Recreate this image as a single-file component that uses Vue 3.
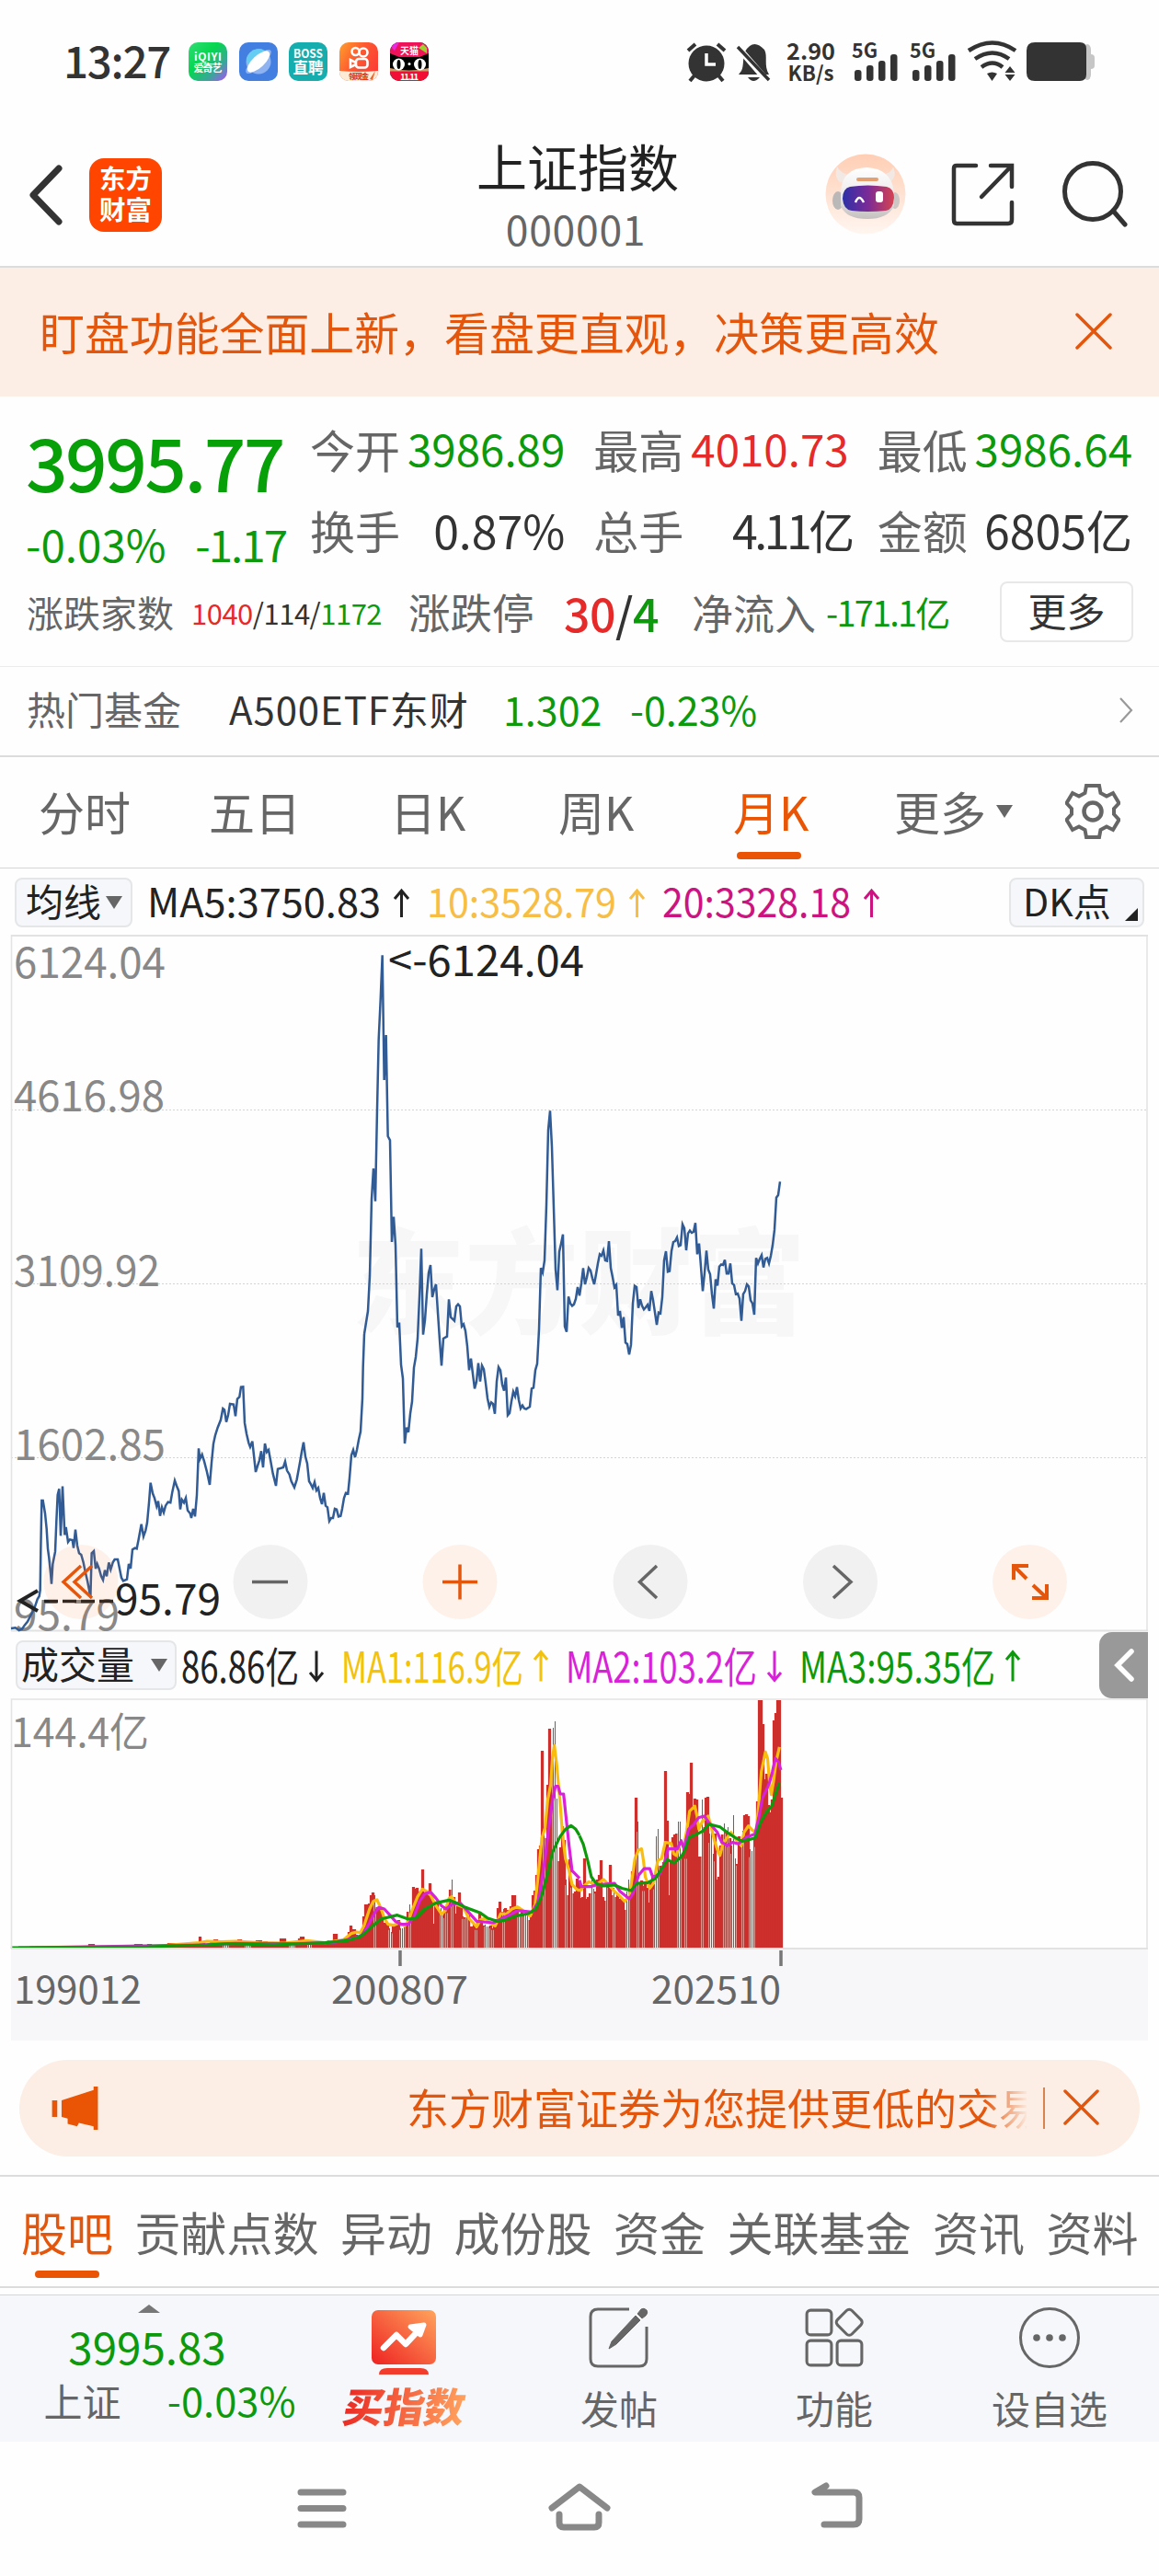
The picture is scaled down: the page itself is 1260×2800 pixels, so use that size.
<script setup>
const quotes = [
  { label: '今开', value: '3986.89', tone: 'down' },
  { label: '最高', value: '4010.73', tone: 'up' },
  { label: '最低', value: '3986.64', tone: 'down' },
  { label: '换手', value: '0.87%', tone: 'big' },
  { label: '总手', value: '4.11亿', tone: 'big tight' },
  { label: '金额', value: '6805亿', tone: 'big' },
]
const periods = [
  { name: '分时', cls: 'p1' },
  { name: '五日', cls: 'p2' },
  { name: '日K', cls: 'p3' },
  { name: '周K', cls: 'p4' },
  { name: '月K', cls: 'p5 on' },
]
const averages = [
  { text: 'MA5:3750.83', width: 254, cls: 'ink' },
  { text: '10:3528.79', width: 206, cls: 'amber' },
  { text: '20:3328.18', width: 205, cls: 'magenta' },
]
const volumes = [
  { text: '86.86亿', x: 197, w: 128, ax: 344, down: true, color: '#222' },
  { text: 'MA1:116.9亿', x: 371, w: 198, ax: 588, down: false, color: '#f3c20c' },
  { text: 'MA2:103.2亿', x: 615, w: 208, ax: 842, down: true, color: '#d822d8' },
  { text: 'MA3:95.35亿', x: 869, w: 213, ax: 1101, down: false, color: '#0c9a0c' },
]
const sections = ['股吧', '贡献点数', '异动', '成份股', '资金', '关联基金', '资讯', '资料']
const scale = [
  { text: '6124.04', y: 119, w: 165 },
  { text: '4616.98', y: 264, w: 164 },
  { text: '3109.92', y: 454, w: 159 },
  { text: '1602.85', y: 643, w: 165 },
  { text: '95.79', y: 828, w: 115 },
]

const priceEarly =
  '36,1410 50,1408 62,1416 72,1412 80,1400 90,1388 104,1360 112,1345 122,1315 128,1305 131,1285 133,1150 136,993 140,993 147,1035 152,1085 156,1150 160,1180 165,1230 168,1265 172,1200 180,1160 184,1060 188,975 193,955 198,1108 204,947 211,1105 215,1080 222,1128 228,1120 236,1122 240,1148 246,1088 252,1140 258,1165 265,1170 272,1195 278,1225 285,1255 290,1280 295,1310 299,1165 306,1158 312,1215 317,1200 323,1215 330,1240 336,1252 342,1220 348,1240 355,1195 361,1218 368,1195 374,1185 384,1185 390,1215 396,1245 402,1255 414,1250 420,1200 426,1215 432,1153 440,1148 446,1150 452,1120 461,1070 468,1110 475,1090 480,1065 486,1000 491,935 498,970 504,985 511,1012 516,995 522,1043 528,1015 534,1032 540,1010 548,998 556,1000 562,965 570,928 576,945 583,962 588,1022 593,990 600,1000 606,985 612,1025 620,1035 624,1050 630,1020 636,1045 642,975 648,823 652,858 659,843 666,865 675,900 684,942 690,870 696,808 702,780 710,755 720,730 727,693 732,697 738,737 744,715 750,678 762,680 768,718 774,662 781,655 786,623 793,622 798,740 804,775 811,805 816,818 823,800 834,900 840,880 846,862 852,832 858,885 864,807 870,835 876,828 882,860 890,905 900,945 906,890 914,888 924,885 930,866 936,895 944,908 950,930 960,950 968,925 978,870 984,835 990,803 996,850 1002,872 1008,930 1014,940 1020,952 1026,933 1032,960 1038,952 1044,985 1050,1005 1056,968 1062,1010 1068,1015 1074,1060 1080,1050 1086,1050 1092,1020 1098,1022 1104,1045 1111,1043 1116,1020 1122,985 1128,968 1135,970 1140,920 1146,845 1152,828 1158,852 1164,828 1170,795 1176,768 1182,660 1184,560 1188,450'
const priceRecent =
  '48,900 60,825 66,710 72,460 78,360 84,467 90,168 95,-60 101,-189 107,-335 113,72 119,-75 125,255 132,268 138,600 144,518 150,610 156,878 162,863 168,1000 174,1045 180,1257 186,1205 192,1220 198,1160 204,1120 210,1010 216,975 222,915 228,780 234,622 240,902 246,855 252,770 258,700 264,675 270,780 276,755 282,738 288,830 294,920 300,1003 306,915 318,908 324,787 330,845 342,857 348,810 354,803 360,810 366,875 372,868 378,890 384,940 390,1018 396,980 402,1030 408,1078 414,1055 420,995 426,1055 432,1003 438,1015 444,1060 450,1110 456,1138 462,1123 468,1128 474,1160 480,1055 486,1008 492,1018 498,1065 504,1085 510,1042 516,1165 522,1158 528,1120 534,1088 540,1103 546,1073 552,1115 558,1143 564,1133 570,1143 576,1145 588,1137 594,1078 600,1075 606,1018 612,997 618,885 624,685 630,700 636,660 642,480 648,235 654,172 660,290 666,490 672,690 678,757 684,632 690,605 696,575 702,875 708,893 714,778 720,800 726,808 732,803 738,785 744,747 750,775 756,735 762,685 768,738 774,715 780,685 786,693 792,718 798,738 804,705 810,670 816,640 822,645 828,628 834,660 840,662 846,597 852,685 858,715 864,748 870,740 876,840 882,825 888,880 894,845 900,928 906,933 912,967 918,935 924,800 930,743 936,747 942,815 948,787 954,808 960,820 966,813 972,805 978,825 984,760 990,790 996,830 1002,870 1008,830 1014,833 1020,780 1026,660 1032,630 1038,697 1044,695 1050,630 1056,600 1062,597 1068,585 1074,613 1080,610 1086,542 1092,555 1098,627 1104,572 1110,563 1116,570 1122,567 1128,538 1134,640 1140,605 1146,680 1152,760 1158,700 1164,628 1170,690 1176,705 1182,770 1188,817 1194,722 1200,742 1206,680 1212,673 1218,675 1224,658 1230,703 1236,703 1242,670 1248,735 1254,740 1260,770 1266,768 1272,785 1278,857 1284,770 1290,760 1296,738 1302,745 1308,790 1314,800 1320,837 1326,652 1332,670 1338,655 1344,643 1350,683 1356,655 1362,652 1368,670 1374,645 1380,610 1386,560 1392,455 1398,447 1404,403'

// Turnover samples as "position height", a trailing g marks a falling month.
const early =
  '30 2,60 1,90 2,130 1,160 2,200 1,230 2,250 5,258 3,300 2,350 2,378 5,390 3,405 5,415 3,440 2,470 6,480 3,500 3,525 4,534 6,540 13,546 7,560 5,575 8,583 10,590 7,610 5g,620 5,640 8,648 10,656 7,670 4g,685 4,703 9,710 5,718 8,730 4,750 7,768 11,775 5,790 4g,800 8,808 11,817 13,825 8,835 5g,850 9,860 7,872 5,880 5,895 9,907 16,914 9,925 8,940 10,945 18,950 25,956 21,963 15,972 14,980 20,985 35,991 48,998 49,1003 58,1009 61,1014 58g,1020 45,1026 46,1033 36,1040 28,1046 27,1051 22g,1056 18g,1062 25,1068 27,1074 28,1080 31,1085 22g,1091 28g,1096 25,1101 40,1106 48g,1111 40,1117 67,1123 65,1128 66,1135 62,1141 86,1147 60,1152 62,1157 60,1162 71,1168 52,1174 27,1180 50,1185 42,1190 44g,1195 36g,1201 46,1206 42g,1211 52,1216 64,1221 75g,1226 56,1231 38,1236 48,1240 61,1245 45,1251 35g,1257 34,1262 46g,1267 36,1274 24,1280 27,1285 22g,1291 28,1296 39,1302 28,1308 25,1314 26g,1319 24g,1325 25,1330 22g,1335 25,1340 32,1345 44,1350 51,1356 40,1361 43g,1366 44,1371 42,1377 40,1383 46,1389 58,1395 44,1401 40g,1407 38g,1412 42,1418 38g,1424 36g,1429 31,1434 37,1439 58,1444 63,1450 80,1455 108,1460 112,1464 215,1469 131g,1474 120,1479 178,1485 239,1490 202,1495 240g,1499 247g,1505 163g,1510 95,1515 110,1519 133,1524 118,1529 75g,1534 58,1539 97,1544 72g,1549 60,1554 62,1560 76,1565 72'
const late =
  '0 55,5 56,10 98,16 54,22 56,27 60,32 75g,37 65g,42 62,47 75,52 80,56 96,61 56,66 52,71 72g,76 70,81 91,86 58,91 66g,96 56,101 60,106 54,111 55,116 52,121 42,126 62g,131 75g,136 58,141 84,146 84,150 164,156 138g,161 70,166 74,171 68g,176 72,181 66,186 50,191 72,196 78,201 70g,206 122g,211 130g,216 90,221 88,226 94,230 193,236 139,242 58,247 95,252 121,257 124,262 125,270 138g,275 100,280 112,286 106g,292 170,297 168,300 202,306 155,312 163,317 162,324 100,330 162g,337 132,342 164,347 165,350 125g,355 128g,360 103g,365 125,370 75,376 78,381 112,385 124,390 136g,395 126,400 132g,405 120,410 112g,414 145g,420 98g,425 92,430 122,435 110,440 128g,445 145,450 146,456 144,462 108g,466 106g,471 120g,476 125,481 160,485 270,490 270,496 244,501 184,506 190,511 156,516 148,521 162,526 248,531 256,536 270,541 270,546 164'
const parse = (raw, origin) =>
  raw.split(',').map((s) => {
    const [p, h] = s.split(' ')
    return { x: origin + Number(p) / 2.489, h: parseFloat(h), fall: h.endsWith('g') }
  })
const samples = [...parse(early, 0), ...parse(late, 630)]
const bars = []
for (let x = 13; x < 850; x += 2) {
  let best = samples[0]
  for (const s of samples) if (Math.abs(s.x - x) < Math.abs(best.x - x)) best = s
  bars.push({ x, h: best.h, fall: best.fall && x > 200 })
}
const rising = bars.filter((b) => !b.fall)
const falling = bars.filter((b) => b.fall)

const volumeLines = [
  {
    color: '#f9bd10',
    early: '50,1070 400,1068 540,1055 560,1050 600,1052 640,1050 700,1055 770,1056 830,1048 880,1055 930,1045 950,1025 965,1020 975,1022 985,1000 1000,945 1010,920 1020,915 1030,940 1040,975 1050,995 1065,998 1080,990 1095,1000 1105,985 1115,950 1130,905 1143,880 1155,888 1165,900 1180,935 1195,962 1205,950 1215,910 1222,905 1235,930 1255,940 1268,975 1280,990 1290,1003 1300,980 1315,975 1325,990 1340,1000 1355,960 1370,962 1385,945 1400,938 1415,950 1435,968 1448,930 1455,850 1466,715 1475,680 1482,590 1490,540 1495,450 1500,412 1506,470 1515,590 1522,700 1530,780 1540,820 1548,865 1560,880 1568,885',
    late: '0,1165 10,1150 25,1135 45,1145 65,1128 80,1145 95,1165 110,1180 122,1195 135,1180 143,1120 150,1065 160,1038 168,1035 173,1070 178,1120 190,1155 200,1140 212,1070 222,1065 232,1015 248,1018 255,1050 262,1055 272,1020 283,1020 290,980 298,920 312,905 318,935 323,975 333,950 348,935 356,965 365,1010 374,1040 380,1055 388,1020 400,1000 410,985 422,1005 438,1025 445,985 457,965 468,978 478,985 485,900 492,800 503,740 509,760 514,830 519,870 525,830 532,770 541,725',
  },
  {
    color: '#d822d8',
    early: '80,1071 540,1062 640,1057 800,1058 900,1055 960,1040 980,1030 1000,990 1015,955 1025,940 1040,945 1055,965 1070,985 1085,995 1105,995 1120,970 1135,920 1150,895 1165,890 1180,910 1195,935 1207,945 1222,930 1245,925 1260,945 1275,965 1290,985 1335,990 1360,975 1385,960 1400,950 1440,955 1455,925 1465,860 1475,780 1485,680 1495,590 1503,545 1510,545 1516,570 1525,570 1532,650 1540,740 1548,820 1568,845',
    late: '0,1130 5,1150 30,1150 45,1145 95,1140 110,1165 135,1187 145,1170 160,1115 175,1095 190,1095 198,1120 215,1115 228,1085 240,1035 265,1035 275,1010 283,1035 295,975 310,960 322,940 338,935 350,955 362,970 373,985 385,1015 400,1025 415,1015 430,1020 450,1000 475,990 485,940 495,880 508,850 515,830 522,800 530,760 538,770 545,795',
  },
  {
    color: '#0c9a0c',
    early: '30,1071 400,1068 560,1062 620,1058 740,1062 880,1055 940,1048 975,1035 1000,1010 1030,978 1075,965 1105,978 1125,975 1150,945 1180,925 1215,916 1240,928 1260,940 1300,958 1320,975 1345,985 1365,982 1395,968 1430,960 1450,945 1465,905 1480,840 1495,760 1515,710 1530,685 1545,673 1558,685 1568,705',
    late: '0,995 10,1020 22,1070 32,1120 45,1140 65,1148 95,1145 115,1155 140,1162 155,1140 185,1138 205,1125 220,1100 238,1068 255,1078 275,1060 285,1040 297,1000 318,990 335,980 350,960 380,968 400,985 420,1000 440,1012 475,1002 490,955 505,925 520,905 530,870 541,835',
  },
]
</script>

<template>
  <div class="screen">
    <header class="status">
      <span class="clock">13:27</span>
      <div class="apps">
        <svg viewBox="0 0 42 42">
          <defs>
            <linearGradient id="qy" x1="0" y1="0" x2="1" y2="1">
              <stop offset="0" stop-color="#31dd76" /><stop offset=".4" stop-color="#05d64f" />
              <stop offset=".72" stop-color="#3aa69a" /><stop offset="1" stop-color="#b14cff" />
            </linearGradient>
          </defs>
          <rect width="42" height="42" rx="10" fill="url(#qy)" />
          <text x="21" y="20" class="tiny" font-size="12" textLength="30">iQIYI</text>
          <text x="21" y="32" class="tiny" font-size="11" textLength="31">爱奇艺</text>
        </svg>
        <svg viewBox="0 0 42 42">
          <rect width="42" height="42" rx="10" fill="#437fe0" />
          <circle cx="21" cy="21" r="13.500" fill="#8fb3f0" />
          <path d="M8 18A13.500 13.500 0 0 1 33 14L10 29Z" fill="#66cdf2" />
          <ellipse cx="21" cy="21" rx="18" ry="6" transform="rotate(-43 21 21)" fill="#8fb3f0" />
          <ellipse cx="21" cy="21" rx="15.500" ry="6.500" transform="rotate(-43 21 21)" fill="#fff" />
        </svg>
        <svg viewBox="0 0 42 42">
          <rect width="42" height="42" rx="10" fill="#15adae" />
          <text x="21" y="17" class="tiny" font-size="13" font-weight="500" textLength="32" lengthAdjust="spacingAndGlyphs">BOSS</text>
          <text x="21" y="34" class="tiny" font-size="16.500" textLength="33">直聘</text>
        </svg>
        <svg viewBox="0 0 42 42">
          <defs>
            <linearGradient id="ks" x1="0" y1="0" x2="1" y2=".6">
              <stop offset="0" stop-color="#ffa02c" /><stop offset=".5" stop-color="#fd5a30" /><stop offset="1" stop-color="#fb3d35" />
            </linearGradient>
          </defs>
          <rect width="42" height="42" rx="10" fill="url(#ks)" />
          <g fill="none" stroke="#fff" stroke-width="2.600">
            <circle cx="17.500" cy="10" r="4" /><circle cx="26" cy="11" r="4.500" />
            <rect x="18" y="18" width="12.500" height="9.500" rx="3" /><path d="M18 22L12 19V27L18 24" />
          </g>
          <path d="M0 31Q20 33 42 31V32A10 10 0 0 1 32 42H10A10 10 0 0 1 0 32Z" fill="#fdebd5" />
          <text x="21" y="40" class="tiny red" font-size="8" textLength="22">领现金</text>
          <path d="M33 40L39 31L36 41Z" fill="#f0642c" />
        </svg>
        <svg viewBox="0 0 42 42">
          <clipPath id="tm"><rect width="42" height="42" rx="10" /></clipPath>
          <g clip-path="url(#tm)">
            <rect width="42" height="42" fill="#000" />
            <path d="M0 0H42V12L32 16H10L0 12Z" fill="#ef1458" />
            <path d="M3 0H10L5 9L2 6Z" fill="#e62ae0" /><path d="M36 2L40 6V12L31 6Z" fill="#9bd12c" />
            <path d="M0 28Q20 33 42 28V32H0Z" fill="#d69a68" /><rect y="31.500" width="42" height="11" fill="#f20f36" />
            <text x="21" y="13" class="tiny" font-size="10" textLength="20">天猫</text>
            <circle cx="9.500" cy="24" r="6.500" fill="#fff" /><circle cx="32.500" cy="24" r="6.500" fill="#fff" />
            <ellipse cx="9.500" cy="24" rx="2" ry="5" /><ellipse cx="32.500" cy="24" rx="2" ry="5" />
            <circle cx="21" cy="23.500" r="1.500" fill="#fff" />
            <text x="21" y="40.500" class="tiny" font-size="9.500" textLength="20">11.11</text>
          </g>
        </svg>
      </div>
      <svg class="sys" viewBox="0 0 446 46">
        <g fill="#333">
          <circle cx="22" cy="23" r="19.500" />
          <g stroke="#333" stroke-width="4" fill="none">
            <path d="M2 9L10 2M34 2L42 9M9 36L4 42M35 36L40 42" />
            <path d="M22 12V24H32" stroke="#fff" stroke-width="3.500" />
          </g>
          <path d="M60 31C63 25 61 18 64 10Q73-5 85 8C89 15 84 25 90 35H57Z" />
          <path d="M67 38H80Q73 46 67 38Z" />
          <path d="M55 4L88 42" stroke="#fff" stroke-width="7" /><path d="M56 5L90 41" stroke="#333" stroke-width="3.500" />
          <text x="135.500" y="18.500" text-anchor="middle" font-size="25" font-weight="700" textLength="53" lengthAdjust="spacingAndGlyphs">2.90</text>
          <text x="135.500" y="41.500" text-anchor="middle" font-size="22" font-weight="700" textLength="50" lengthAdjust="spacingAndGlyphs">KB/s</text>
          <g v-for="x in [180, 243]" :key="x">
            <text :x="x" y="16.500" font-size="22" font-weight="700" textLength="28" lengthAdjust="spacingAndGlyphs">5G</text>
            <rect :x="x + 3" y="30" width="7.500" height="12" rx="3" /><rect :x="x + 16" y="25" width="7.500" height="17" rx="3" />
            <rect :x="x + 29" y="20" width="7.500" height="22" rx="3" /><rect :x="x + 42" y="13" width="7.500" height="29" rx="3" />
          </g>
          <g fill="none" stroke="#333" stroke-width="4.500">
            <path d="M307 9Q333-8 358 9M314 18Q333 5 351 18M321 27Q333 18 344 27" />
          </g>
          <path d="M327 34Q332.500 31 338 34L332.500 42Z" />
          <path d="M352 26L357.500 33H346.500ZM352 42L357.500 35H346.500Z" />
          <rect x="432" y="2" width="8" height="39" rx="6" fill="#c6c6c6" /><rect x="435" y="13" width="9" height="16" rx="4" fill="#c6c6c6" />
          <path d="M379 0H428Q435 0 435 7V35Q435 42 428 42H379Q370 42 370 33V9Q370 0 379 0Z" />
        </g>
      </svg>
    </header>

    <nav class="top">
      <svg class="back" viewBox="0 0 38 66"><path d="M33 4L5 33L33 62" fill="none" stroke="#333" stroke-width="7" stroke-linecap="round" stroke-linejoin="round" /></svg>
      <div class="brand"><span>东方</span><span>财富</span></div>
      <div class="name"><b>上证指数</b><i>000001</i></div>
      <svg class="robot" viewBox="0 0 88 88">
        <defs>
          <linearGradient id="halo" x1="0" y1="0" x2="0" y2="1"><stop offset="0" stop-color="#ffceb4" /><stop offset="1" stop-color="#fff6f1" /></linearGradient>
          <linearGradient id="visor" x1="0" y1="0" x2="1" y2="0"><stop offset="0" stop-color="#2c30a8" /><stop offset=".5" stop-color="#7c2b96" /><stop offset="1" stop-color="#d64350" /></linearGradient>
          <linearGradient id="shell" x1="0" y1="0" x2="0" y2="1"><stop offset="0" stop-color="#fff" /><stop offset=".5" stop-color="#eeeceb" /><stop offset="1" stop-color="#c4c0bf" /></linearGradient>
        </defs>
        <circle cx="44" cy="44" r="43.500" fill="url(#halo)" />
        <path d="M16 31Q9 25 13 14Q18 23 28 23L24 32ZM70 31Q79 25 74 15Q70 23 60 23L64 32Z" fill="#f2e9e5" />
        <ellipse cx="14" cy="51" rx="6" ry="10" fill="#bbb8b8" /><ellipse cx="76" cy="51" rx="5" ry="9" fill="#ccc6c4" />
        <path d="M17 42Q18 16 45 15Q72 16 75 42V57Q68 71 46 71Q23 71 17 57Z" fill="url(#shell)" />
        <rect x="34" y="26" width="24" height="4" rx="2" fill="#e5a071" />
        <path d="M27 36Q46 33 67 36Q75 38 75 48Q74 61 66 62Q46 64 29 62Q20 61 19 49Q19 38 27 36Z" fill="url(#visor)" />
        <path d="M33 53Q37 43 42 53" fill="none" stroke="#fff" stroke-width="2.500" />
        <rect x="55" y="41" width="8" height="12" rx="3" fill="#fff" />
      </svg>
      <svg class="share" viewBox="0 0 70 70"><path d="M27 3H6Q3 3 3 6V62Q3 66 6 66H62Q66 66 66 62V43M43 3H66V26M65 4L33 37" fill="none" stroke="#333" stroke-width="4.500" stroke-linecap="round" /></svg>
      <svg class="search" viewBox="0 0 72 72"><circle cx="33" cy="33" r="30.500" fill="none" stroke="#333" stroke-width="5" /><path d="M55 54L68 69" stroke="#333" stroke-width="5" stroke-linecap="round" /></svg>
    </nav>

    <div class="notice">
      <span>盯盘功能全面上新，看盘更直观，决策更高效</span>
      <svg viewBox="0 0 40 40"><path d="M2 2L38 38M38 2L2 38" stroke="#e4560c" stroke-width="3.500" stroke-linecap="round" /></svg>
    </div>

    <section class="quote">
      <div class="head">
        <div class="last">
          <strong>3995.77</strong>
          <div><span>-0.03%</span><span class="delta">-1.17</span></div>
        </div>
        <dl>
          <div v-for="q in quotes" :key="q.label"><dt>{{ q.label }}</dt><dd :class="q.tone">{{ q.value }}</dd></div>
        </dl>
      </div>
      <div class="breadth">
        <span class="lab">涨跌家数</span>
        <span class="counts"><em class="up">1040</em>/114/<em class="down">1172</em></span>
        <span class="lab mid">涨跌停</span>
        <span class="limits"><em class="up">30</em>/<em class="down">4</em></span>
        <span class="lab mid flow">净流入</span>
        <span class="net">-171.1亿</span>
        <button>更多</button>
      </div>
    </section>

    <section class="fund">
      <span class="f1">热门基金</span><span class="f2">A500ETF东财</span><span class="f3">1.302</span><span class="f4">-0.23%</span>
      <svg viewBox="0 0 16 30"><path d="M2 2L14 15L2 28" fill="none" stroke="#999" stroke-width="2.200" /></svg>
    </section>

    <nav class="periods">
      <span v-for="p in periods" :key="p.name" :class="p.cls">{{ p.name }}</span>
      <span class="p6">更多</span><i class="tri"></i>
      <svg viewBox="0 0 60 60"><path d="M23 2H37L38.500 10L45 13.500L52 10L58.500 21L53 27V33L58.500 39L52 50L45 46.500L38.500 50L37 58H23L21.500 50L15 46.500L8 50L1.500 39L7 33V27L1.500 21L8 10L15 13.500L21.500 10Z" fill="none" stroke="#666" stroke-width="4" /><circle cx="30" cy="30" r="9.500" fill="none" stroke="#666" stroke-width="4.500" /></svg>
    </nav>

    <div class="averages">
      <div class="chip ma"><span>均线</span><i class="tri"></i></div>
      <template v-for="a in averages" :key="a.text">
        <svg class="avg" :class="a.cls" :width="a.width + 32" height="60">
          <text x="0" y="45.500" font-size="43" :textLength="a.width" lengthAdjust="spacingAndGlyphs">{{ a.text }}</text>
          <path :transform="`translate(${a.width + 14} 15)`" d="M8.500 31V3M1 11L8.500 2L16 11" />
        </svg>
      </template>
      <div class="chip dk"><span>DK点</span></div>
    </div>

    <div class="chart">
      <svg viewBox="0 944 1260 830" width="1260" height="830" class="price">
        <text x="629" y="1440" text-anchor="middle" class="mark" textLength="494" lengthAdjust="spacingAndGlyphs">东方财富</text>
        <g fill="none" stroke="#d4d4d4" stroke-width="1.200" stroke-dasharray="2 2">
          <path d="M12 1206.500H1247M12 1395.500H1247M12 1584.500H1247" />
        </g>
        <path d="M12.500 1773V1017H1247V1773" fill="none" stroke="#e4e4e4" stroke-width="1.600" />
        <path d="M12 1017H1248M12 1772.500H1248" stroke="#e2e2e2" stroke-width="2" />
        <text v-for="s in scale" :key="s.text" x="15" :y="s.y + 944" class="axis" :textLength="s.w" lengthAdjust="spacingAndGlyphs">{{ s.text }}</text>
        <g fill="none" stroke="#315b94" stroke-width="7.500" stroke-linejoin="miter">
          <polyline :points="priceEarly" transform="translate(0 1300) scale(.33333)" />
          <polyline :points="priceRecent" transform="translate(380 1150) scale(.33333)" />
        </g>
        <text x="422" y="1060.500" class="tip" textLength="213" lengthAdjust="spacingAndGlyphs">&lt;-6124.04</text>
        <path d="M41 1729L22 1740L41 1751" fill="none" stroke="#222" stroke-width="4" />
        <path d="M48 1740.500H124" stroke="#222" stroke-width="3.500" stroke-dasharray="15 5" />
        <text x="125" y="1755" class="tip" textLength="115" lengthAdjust="spacingAndGlyphs">95.79</text>
        <g v-for="(x, i) in [88, 294, 500, 707, 913.5, 1119.5]" :key="x">
          <circle :cx="x" cy="1719.500" r="40.500" :fill="[0, 2, 5].includes(i) ? '#ff6a1a' : '#888'" :opacity="[0, 2, 5].includes(i) ? 0.09 : 0.11" />
        </g>
        <g fill="none" stroke="#e4560c" stroke-width="3.500">
          <path d="M88 1702L69 1719.500L88 1737M100 1702L81 1719.500L100 1737" />
          <path d="M481 1719.500H519M500 1700.500V1738.500" />
          <path d="M1102 1717V1702H1118M1103 1703L1116 1716M1122 1737H1138V1722M1137 1736L1123 1723" stroke-width="4" />
        </g>
        <g fill="none" stroke="#666" stroke-width="3.500">
          <path d="M274 1719.500H313" /><path d="M714 1702L695.500 1719.500L714 1737" /><path d="M906 1702L925 1719.500L906 1737" />
        </g>
      </svg>
    </div>

    <div class="volhead">
      <div class="chip vol"><span>成交量</span><i class="tri"></i></div>
      <svg viewBox="198 1774 950 72" width="950" height="72">
        <g v-for="v in volumes" :key="v.text" :fill="v.color">
          <text :x="v.x" y="1828.500" font-size="46" :textLength="v.w" lengthAdjust="spacingAndGlyphs">{{ v.text }}</text>
          <path :transform="`translate(${v.ax} 1811) scale(1 ${v.down ? -1 : 1})`" d="M0 16.500V-15M-7-7L0-15.500L7-7" fill="none" :stroke="v.color" stroke-width="3" />
        </g>
      </svg>
      <div class="fold"><svg viewBox="0 0 24 36"><path d="M20 3L5 18L20 33" fill="none" stroke="#fff" stroke-width="5.500" stroke-linecap="round" /></svg></div>
    </div>

    <div class="volume">
      <svg viewBox="0 1846 1260 273" width="1260" height="273">
        <text x="12" y="1899" font-size="44" fill="#888" textLength="150" lengthAdjust="spacingAndGlyphs">144.4亿</text>
        <rect v-for="b in rising" :key="b.x" :x="b.x - 1.1" :y="2118 - b.h" width="3.200" :height="b.h" fill="#cd2f2c" />
        <g v-for="b in falling" :key="b.x">
          <rect :x="b.x - 0.5" :y="2118 - b.h * 0.92" width="2" :height="b.h * 0.92" fill="#fdf3ec" />
          <rect :x="b.x" :y="2118 - b.h" width="1" :height="b.h" fill="#2d8a2d" />
        </g>
        <g v-for="l in volumeLines" :key="l.color" fill="none" :stroke="l.color" stroke-width="3.200" stroke-linejoin="round">
          <polyline :points="l.early" vector-effect="non-scaling-stroke" transform="translate(0 1760) scale(.40177 .33333)" />
          <polyline :points="l.late" vector-effect="non-scaling-stroke" transform="translate(630 1640) scale(.40177 .35714)" />
        </g>
        <path d="M12.500 2118V1847H1247V2118" fill="none" stroke="#e4e4e4" stroke-width="1.600" />
        <path d="M12 2118H1248" stroke="#e2e2e2" stroke-width="2" />
      </svg>
      <svg class="dates" viewBox="12 2119 1236 99" width="1236" height="99">
        <path d="M435 2120V2137M849 2120V2137" stroke="#777" stroke-width="3.500" />
        <text x="15" y="2177.500" textLength="139" lengthAdjust="spacingAndGlyphs">199012</text>
        <text x="360" y="2177.500" textLength="149" lengthAdjust="spacingAndGlyphs">200807</text>
        <text x="708" y="2177.500" textLength="141" lengthAdjust="spacingAndGlyphs">202510</text>
      </svg>
    </div>

    <div class="ad">
      <svg class="horn" viewBox="0 0 54 50"><path d="M0 16H6V35H0ZM11 16L48 4V0H53V50H48V46L31 42L29 46L18 43V37L11 35Z" fill="#e95504" /></svg>
      <div class="marquee">东方财富证券为您提供更低的交易</div>
      <i></i>
      <svg class="x" viewBox="0 0 40 40"><path d="M2 2L38 38M38 2L2 38" stroke="#e4560c" stroke-width="3.500" stroke-linecap="round" /></svg>
    </div>

    <nav class="sections">
      <span v-for="(s, i) in sections" :key="s" :class="{ on: i === 0 }">{{ s }}</span>
    </nav>

    <footer class="bar">
      <div class="mini">
        <svg viewBox="0 0 24 9"><path d="M0 9L12 0L24 9Z" fill="#777" /></svg>
        <b>3995.83</b>
        <p><span>上证</span><em>-0.03%</em></p>
      </div>
      <div class="item buy">
        <svg viewBox="0 0 72 72">
          <defs><linearGradient id="buy" x1="0" y1="1" x2="1" y2="0"><stop offset="0" stop-color="#ee2222" /><stop offset="1" stop-color="#ffa45c" /></linearGradient></defs>
          <rect x="1" y="1" width="70" height="59" rx="7" fill="url(#buy)" />
          <path d="M14 42L28 28L38 38L53 22" fill="none" stroke="#fff" stroke-width="6.500" stroke-linecap="round" stroke-linejoin="round" />
          <path d="M43 19L58 17L54 28Z" fill="#fff" stroke="#fff" stroke-width="5" stroke-linejoin="round" />
          <path d="M9 71Q9 64 18 64H54Q63 64 63 71Z" fill="#f23c2c" />
        </svg>
        <span>买指数</span>
      </div>
      <div class="item post">
        <svg viewBox="0 0 68 68"><path d="M45 3H11Q3 3 3 11V57Q3 65 11 65H56Q64 65 64 57V22" fill="none" stroke="#666" stroke-width="3" /><path d="M23 46L26 38L52 10L57 15L31 41ZM54 8L58 3Q61 1 64 4Q66 7 63 10L59 13Z" fill="#666" stroke="#666" stroke-width="1" /></svg>
        <span>发帖</span>
      </div>
      <div class="item tools">
        <svg viewBox="0 0 66 66"><g fill="none" stroke="#666" stroke-width="3"><rect x="4" y="4" width="26" height="26" rx="4" /><rect x="4" y="36" width="26" height="26" rx="4" /><rect x="36" y="36" width="26" height="26" rx="4" /><rect x="38" y="6" width="21.500" height="21.500" rx="4" transform="rotate(45 48.750 16.750)" /></g></svg>
        <span>功能</span>
      </div>
      <div class="item pick">
        <svg viewBox="0 0 68 68"><circle cx="34" cy="34" r="31.500" fill="none" stroke="#666" stroke-width="3" /><g fill="#666"><circle cx="20" cy="34" r="3.800" /><circle cx="34" cy="34" r="3.800" /><circle cx="48" cy="34" r="3.800" /></g></svg>
        <span>设自选</span>
      </div>
    </footer>

    <div class="keys">
      <svg viewBox="0 0 56 56"><path d="M5 11H51M5 28.500H51M5 46H51" stroke="#888" stroke-width="7" stroke-linecap="round" /></svg>
      <svg viewBox="0 0 68 56"><path d="M4 28L34 5L64 28M12 35V44Q12 49 17 49H50Q55 49 55 44V35" fill="none" stroke="#888" stroke-width="7" stroke-linecap="round" stroke-linejoin="round" /></svg>
      <svg viewBox="0 0 60 56"><path d="M17 4L5 11H47Q53 11 53 17V40Q53 46 47 46H15" fill="none" stroke="#888" stroke-width="7" stroke-linecap="round" stroke-linejoin="round" /></svg>
    </div>
  </div>
</template>

<style>
body { margin: 0; background: #fff; }
</style>

<style scoped>
.screen {
  width: 1260px;
  height: 2800px;
  overflow: hidden;
  background: #fefefe;
  color: #333;
  font-family: "Noto Sans CJK SC", sans-serif;
  line-height: 1;
  white-space: nowrap;
  display: flex;
  flex-direction: column;
}
.screen > * { flex: none; box-sizing: border-box; }
svg { display: block; flex: none; }
em, i, b { font-style: normal; font-weight: 400; }
.up { color: #e62a2a; }
.down { color: #0c9a0c; }
.tri { display: block; border: 9px solid transparent; border-top: 14px solid #666; border-bottom: 0; }

.status { height: 120px; display: flex; align-items: flex-start; padding: 46px 0 0 69px; }
.clock { width: 136px; height: 42px; line-height: 37px; font-size: 47.5px; font-weight: 500; letter-spacing: -1.3px; }
.apps { display: flex; gap: 12.7px; width: 541px; }
.apps svg { width: 42px; height: 42px; overflow: visible; }
.tiny { fill: #fff; font-weight: 700; text-anchor: middle; }
.tiny.red { fill: #e23b1c; font-weight: 900; }
.sys { width: 446px; height: 46px; overflow: visible; }

.top { height: 171px; display: flex; align-items: flex-start; border-bottom: 2px solid #dcdcdc; }
.back { width: 38px; height: 66px; margin: 59px 0 0 31px; }
.brand { margin: 52px 0 0 28px; width: 79px; height: 80px; box-sizing: border-box; padding-top: 4px; border-radius: 16px; background: #ff4500; color: #fff; font-size: 28.5px; font-weight: 700; line-height: 34px; display: flex; flex-direction: column; align-items: center; }
.name { margin: 29px 0 0 342px; width: 220px; display: flex; flex-direction: column; align-items: center; }
.name b { font-size: 55px; line-height: 60px; color: #222; }
.name i { font-size: 44.5px; line-height: 60px; margin: 9px 4px 0 0; color: #666; letter-spacing: 0.7px; }
.robot { width: 88px; height: 88px; margin: 47px 0 0 159px; }
.share { width: 70px; height: 70px; margin: 57px 0 0 49px; }
.search { width: 72px; height: 72px; margin: 55px 0 0 51px; }

.notice { height: 140px; background: #fceee5; display: flex; align-items: center; padding: 0 51px 0 43px; justify-content: space-between; color: #e4560c; font-size: 48.9px; }
.notice svg { width: 40px; height: 40px; margin-bottom: 2px; }
.notice span { padding-bottom: 2px; }

.quote { height: 294px; border-bottom: 1px solid #ebebeb; }
.head { display: flex; padding: 15px 29px 0 28px; height: 193px; box-sizing: border-box; }
.last { width: 309px; color: #08a008; }
.last strong { display: block; font-size: 80px; line-height: 108px; font-weight: 500; letter-spacing: -2.5px; }
.last div { display: flex; justify-content: space-between; width: 281px; font-size: 47.5px; line-height: 60px; margin-top: 7px; color: #0c9a0c; }
.delta { letter-spacing: -2px; margin-right: -2px; }
dl { margin: -3px 0 0; flex: 1; display: grid; grid-template-columns: 1fr 1fr 1fr; grid-template-rows: 88px 88px; column-gap: 31px; }
dl div { display: flex; justify-content: space-between; align-items: center; }
dt { font-size: 49px; color: #666; }
dd { margin: 0; font-size: 47.5px; }
dd.big { font-size: 50px; }
dd.tight { letter-spacing: -3.5px; margin-right: -3px; }
.breadth { display: flex; align-items: center; height: 70px; padding-left: 29px; margin-top: 6px; }
.lab { font-size: 40px; color: #666; width: 179px; }
.lab.mid { font-size: 45.5px; width: 169px; }
.lab.flow { width: 146px; font-size: 45px; }
.counts { font-size: 31px; width: 236px; letter-spacing: -0.5px; }
.limits { font-size: 50px; width: 139px; font-weight: 500; letter-spacing: -0.5px; }
.limits em { font-weight: 500; }
.net { font-size: 38px; color: #0c9a0c; width: 189px; letter-spacing: -1.8px; }
button { width: 145px; height: 66px; box-sizing: border-box; padding: 0 0 5px; border: 2px solid #e8e8e8; border-radius: 8px; background: #fff; color: #333; font: 42px/1 "Noto Sans CJK SC", sans-serif; }

.fund { height: 98px; border-bottom: 2px solid #dcdcdc; display: flex; align-items: center; padding: 0 28px 2px 29px; font-size: 42px; }
.fund span { padding-bottom: 4px; }
.f1 { width: 220px; color: #666; }
.f2 { width: 298px; letter-spacing: 0.9px; }
.f3 { width: 138px; color: #0c9a0c; font-size: 43px; }
.f4 { width: 531px; color: #0c9a0c; font-size: 43px; }
.fund svg { width: 16px; height: 30px; }

.periods { height: 121px; border-bottom: 1px solid #d4d6d6; display: flex; align-items: center; padding: 0 0 3px 42px; font-size: 50px; color: #666; }
.periods span { height: 100px; line-height: 98px; position: relative; }
.p1 { width: 185px; } .p2 { width: 197px; } .p3 { width: 183px; } .p4 { width: 190px; } .p5 { width: 175px; } .p6 { width: 111px; }
.periods .on { color: #e95504; }
.periods .on::after { content: ""; position: absolute; left: 4px; bottom: -2px; width: 70px; height: 8px; border-radius: 4px; background: #e95504; }
.periods svg { width: 60px; height: 60px; margin-left: 57px; }

.averages { height: 74px; display: flex; align-items: center; padding-left: 16px; margin-bottom: -74px; position: relative; }
.chip { box-sizing: border-box; background: #f6f7fa; border: 2px solid #e4e6e8; border-radius: 8px; height: 54px; color: #222; font-size: 41px; line-height: 44px; display: flex; align-items: center; flex: none; }
.chip span { padding-bottom: 6px; }
.ma { width: 128px; padding-left: 10px; gap: 5px; margin-right: 16px; }
.avg { margin-right: 18px; overflow: visible; }
.avg text { fill: currentColor; }
.avg path { fill: none; stroke: currentColor; stroke-width: 3; }
.ink { color: #222; }
.amber { color: #f7bd45; }
.magenta { color: #cc1480; }
.dk { width: 147px; margin-left: auto; margin-right: 16px; padding-left: 13px; font-size: 41px; position: relative; }
.dk::after { content: ""; position: absolute; right: 5px; bottom: 5px; border-left: 14px solid transparent; border-bottom: 14px solid #222; }

.chart { height: 830px; }
.mark { font-size: 124px; font-weight: 900; fill: #f7f7f7; }
.axis { font-size: 46.5px; fill: #888; }
.tip { font-size: 46.5px; fill: #222; }

.volhead { height: 72px; display: flex; padding-left: 17px; align-items: center; }
.vol { width: 175px; padding-left: 4px; margin-right: 6px; justify-content: space-between; padding-right: 8px; }
.fold { width: 53px; height: 72px; margin-left: 47px; border-radius: 14px 0 0 14px; background: #999; display: flex; align-items: center; justify-content: center; flex: none; }
.fold svg { width: 24px; height: 36px; }

.volume { height: 393px; }
.volume svg { overflow: hidden; }
.dates { margin-left: 12px; background: #f7f7fa; }
.dates text { font-size: 42.5px; fill: #666; }

.ad { height: 105px; width: 1218px; margin-left: 21px; border-radius: 53px; background: #fceee5; display: flex; align-items: center; color: #e4560c; }
.horn { width: 54px; height: 47px; margin-left: 34px; }
.marquee { margin-left: 333px; width: 674px; height: 70px; line-height: 64px; overflow: hidden; font-size: 46px; -webkit-mask-image: linear-gradient(90deg, #000 628px, transparent 676px); mask-image: linear-gradient(90deg, #000 628px, transparent 676px); }
.ad i { width: 2px; height: 45px; margin-left: 18px; background: #d9834f; }
.x { width: 39px; height: 39px; margin: 0 0 2px 20px; }

.sections { height: 123px; margin-top: 20px; border-top: 2px solid #dcdcdc; border-bottom: 2px solid #dcdcdc; display: flex; gap: 23.5px; padding-left: 23px; font-size: 50px; color: #666; }
.sections span { line-height: 118px; position: relative; }
.sections .on { color: #e4560c; }
.sections .on::after { content: ""; position: absolute; left: 15px; top: 102px; width: 70px; height: 8px; border-radius: 4px; background: #e95504; }

.bar { height: 160px; margin-top: 7px; border-top: 1px solid #d4d6d8; background: #f6f7fa; display: flex; align-items: flex-start; color: #666; }
.mini { width: 323px; display: flex; flex-direction: column; align-items: center; padding-top: 10px; }
.mini svg { width: 24px; height: 9px; }
.mini b { font-size: 47.5px; line-height: 60px; color: #0c9a0c; margin: 6px 3px 0 0; }
.mini p { margin: 1px 0 0 47px; width: 275px; display: flex; justify-content: space-between; font-size: 42px; line-height: 56px; box-sizing: border-box; padding: 0 1px 0 0; }
.mini em { color: #0c9a0c; font-size: 43.5px; }
.item { display: flex; flex-direction: column; align-items: center; font-size: 42px; }
.item span { line-height: 56px; }
.item svg { width: 68px; height: 68px; margin: 12px 0 14px; }
.buy { width: 232px; }
.buy svg { width: 72px; height: 72px; margin: 15px 0 0; }
.buy span { margin: 4px 0 0 2px; font-size: 44px; font-weight: 900; transform: skewX(-10deg); background: linear-gradient(90deg, #ea2a24, #ffa25e); -webkit-background-clip: text; background-clip: text; color: transparent; }
.post { width: 236px; } .tools { width: 232px; } .pick { width: 236px; }

.keys { height: 146px; display: flex; align-items: flex-start; padding: 44px 0 0 322px; }
.keys svg { height: 56px; }
.keys svg:nth-child(1) { width: 56px; }
.keys svg:nth-child(2) { width: 68px; margin-left: 218px; }
.keys svg:nth-child(3) { width: 60px; margin-left: 217px; }
</style>
